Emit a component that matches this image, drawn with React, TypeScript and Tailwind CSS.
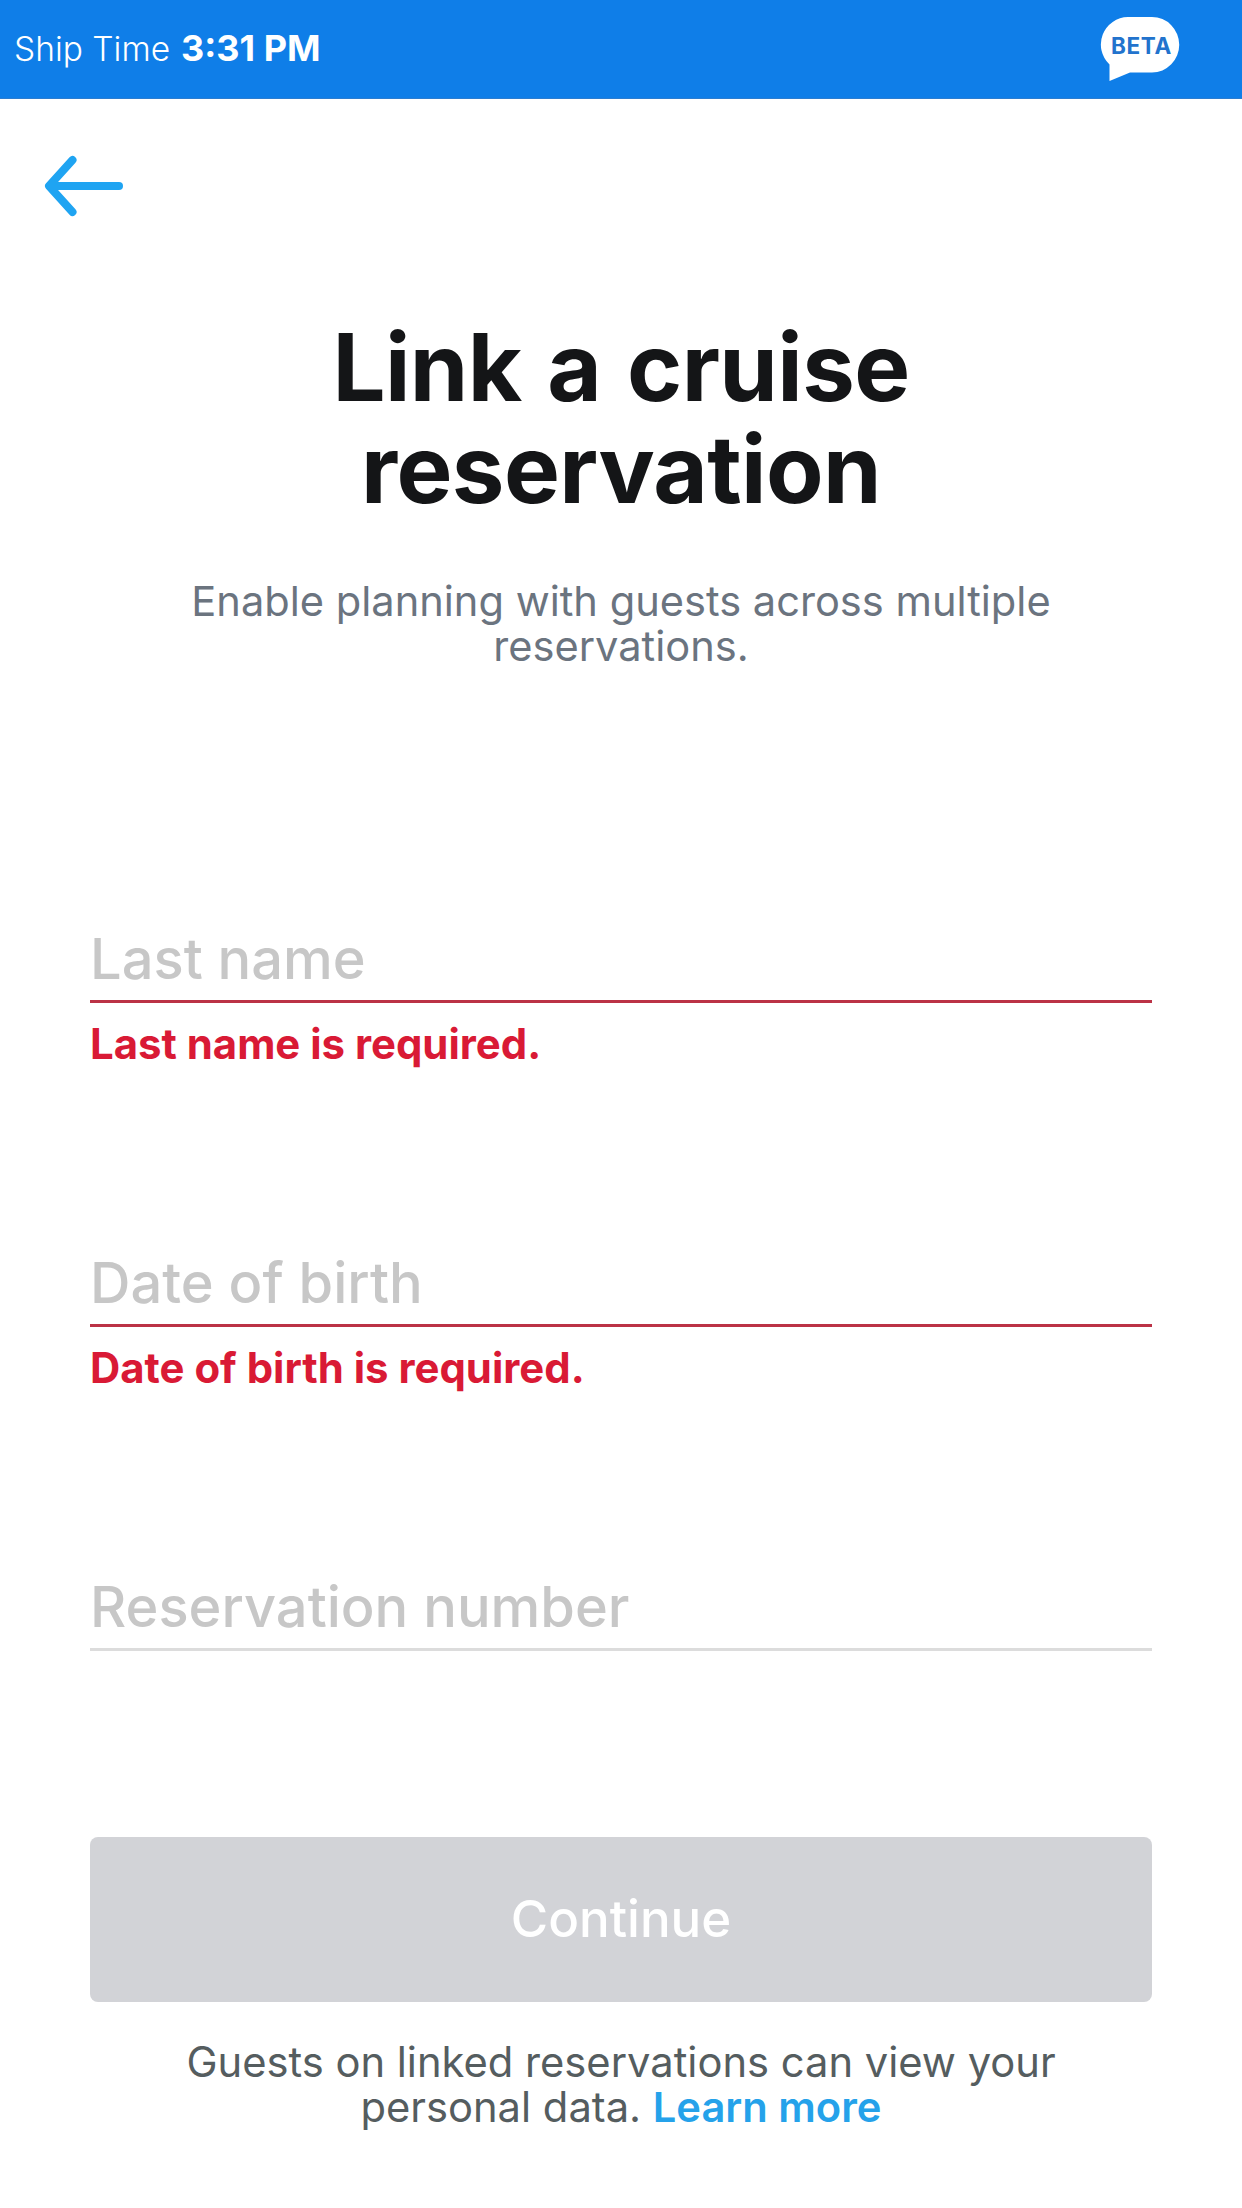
import React from "react";

interface FieldProps {
    label: string;
    error?: string;
}

const Field = ({ label, error }: FieldProps) => (
    <div className="h-[324px]">
        <div
            className={`border-b-[3px] pt-px pb-[9px] text-[56px] leading-[64px] font-medium text-[#c7c7c7] ${
                error ? "border-[#bb3246]" : "border-[#dcdcdc]"
            }`}
        >
            {label}
        </div>
        {error && (
            <p className="mt-4 text-[41.9px] leading-[50px] font-bold text-[#d91a35]">{error}</p>
        )}
    </div>
);

const BetaBadge = () => (
    <svg width="80" height="66" viewBox="0 0 80 66" className="mr-[62px]" aria-label="Beta">
        <path
            d="M28 1H52A27 27.5 0 0 1 52 56.5H30L9.500 65V48.500A27.500 27.500 0 0 1 28 1Z"
            fill="#fff"
        />
        <text
            x="41.500"
            y="38"
            textAnchor="middle"
            fill="#2273cd"
            className="text-[22.5px] font-bold tracking-[0.7px]"
        >
            BETA
        </text>
    </svg>
);

const StatusBar = () => (
    <header className="flex h-[99px] items-center justify-between border-b border-[#2c7dd0] bg-[#0f7ee8] text-white">
        <div className="flex items-baseline gap-[11px] pb-0.5 pl-[14px] text-[33.500px] leading-[48px] font-[350]">
            Ship Time
            <span className="text-[36px] font-bold">3:31 PM</span>
        </div>
        <BetaBadge />
    </header>
);

const BackArrow = () => (
    <svg
        width="84"
        height="62"
        viewBox="0 0 84 62"
        fill="none"
        stroke="#1fa4f2"
        strokeWidth="8"
        strokeLinecap="round"
        strokeLinejoin="round"
    >
        <path d="M32.500 5L9 31L32.500 57" />
        <path d="M10 31H79" />
    </svg>
);

export default function App() {
    return (
        <div className="flex h-[2208px] w-[1242px] flex-col bg-white font-['Inter',sans-serif]">
            <StatusBar />

            <button className="mt-[56px] ml-10 h-[62px] w-[84px]" aria-label="Back">
                <BackArrow />
            </button>

            <main className="flex flex-col px-[90px] pt-[99px]">
                <h1 className="text-center text-[94px] leading-[102px] font-bold tracking-[-0.6px] text-[#141517] [word-spacing:4px]">
                    Link a cruise
                    <br />
                    reservation
                </h1>
                <p className="mt-[59px] text-center text-[41.6px] leading-[45px] text-[#6b747f]">
                    Enable planning with guests across multiple
                    <br />
                    reservations.
                </p>

                <form className="mt-[257px]">
                    <Field label="Last name" error="Last name is required." />
                    <Field label="Date of birth" error="Date of birth is required." />
                    <Field label="Reservation number" />
                </form>

                <button className="-mt-[61px] h-[165px] rounded-lg bg-[#d2d3d7] pb-px text-[51px] font-medium text-white">
                    Continue
                </button>

                <p className="mt-[38px] text-center text-[41.7px] leading-[45px] text-[#555d5f]">
                    Guests on linked reservations can view your
                    <br />
                    personal data. <a className="font-semibold text-[#25a2ea]">Learn more</a>
                </p>
            </main>
        </div>
    );
}
